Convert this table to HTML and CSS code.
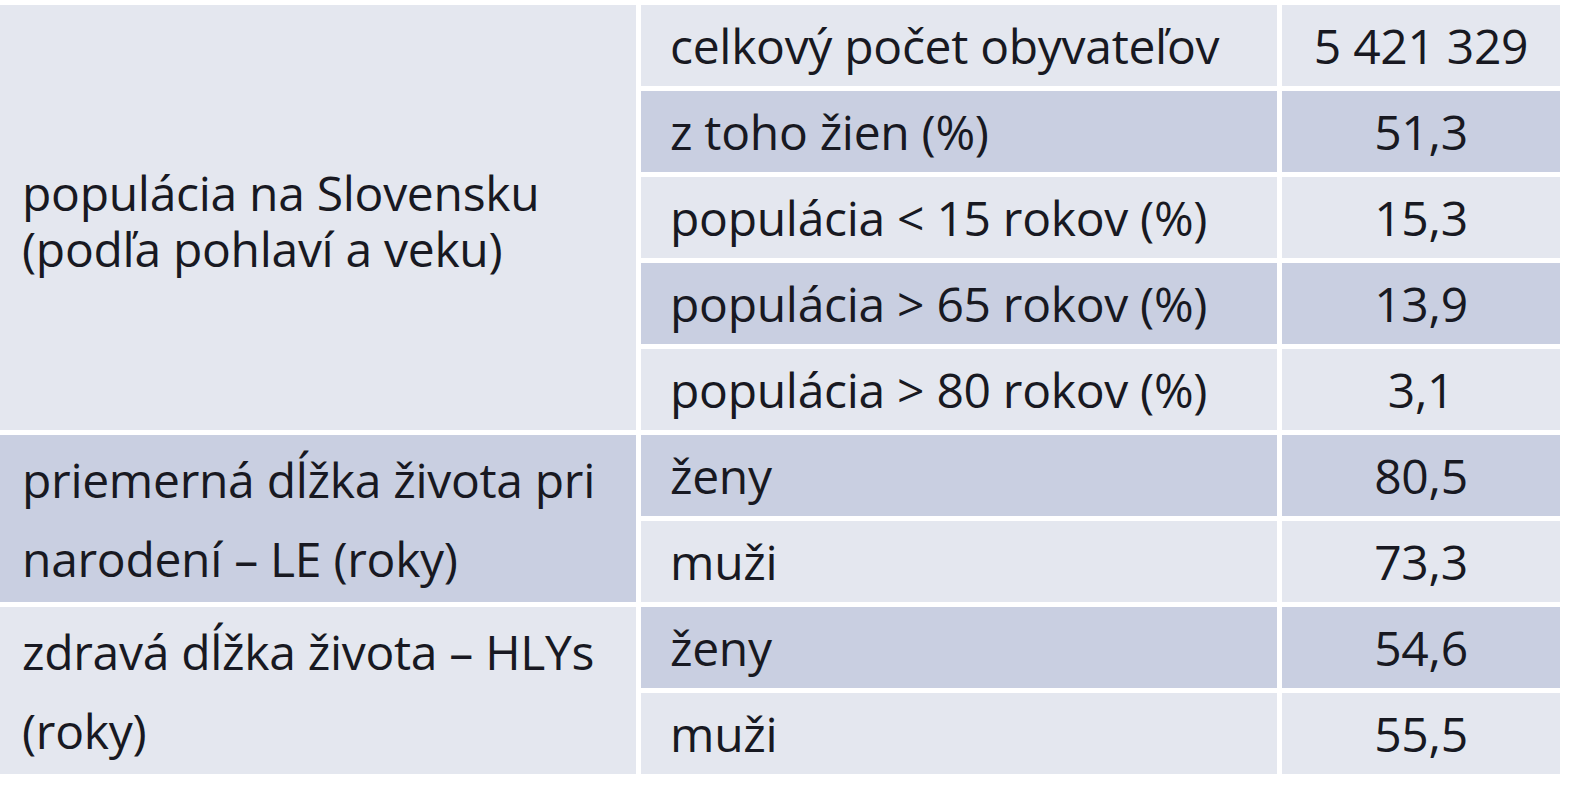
FILE: index.html
```html
<!DOCTYPE html>
<html lang="sk">
<head>
<meta charset="utf-8">
<title>Populácia na Slovensku</title>
<link rel="stylesheet" href="styles.css">
</head>
<body>
<div class="table">
  <div class="group light span5"><div class="glabel tight">populácia na Slovensku<br>(podľa pohlaví a veku)</div></div>
  <div class="cell label light">celkový počet obyvateľov</div>
  <div class="cell num light">5 421 329</div>
  <div class="cell label dark">z toho žien (%)</div>
  <div class="cell num dark">51,3</div>
  <div class="cell label light">populácia &lt; 15 rokov (%)</div>
  <div class="cell num light">15,3</div>
  <div class="cell label dark">populácia &gt; 65 rokov (%)</div>
  <div class="cell num dark">13,9</div>
  <div class="cell label light">populácia &gt; 80 rokov (%)</div>
  <div class="cell num light">3,1</div>

  <div class="group dark span2"><div class="glabel wide">priemerná dĺžka života pri<br>narodení – LE (roky)</div></div>
  <div class="cell label dark">ženy</div>
  <div class="cell num dark">80,5</div>
  <div class="cell label light">muži</div>
  <div class="cell num light">73,3</div>

  <div class="group light span2"><div class="glabel wide">zdravá dĺžka života – HLYs<br>(roky)</div></div>
  <div class="cell label dark">ženy</div>
  <div class="cell num dark">54,6</div>
  <div class="cell label light">muži</div>
  <div class="cell num light">55,5</div>
</div>
</body>
</html>
```

FILE: styles.css
```css
html, body {
  margin: 0;
  padding: 0;
  background: #ffffff;
}

body {
  padding-top: 5px;
  font-family: "Open Sans", "Noto Sans", sans-serif;
  color: #181922;
}

.table {
  display: grid;
  grid-template-columns: 636px 636px 278px;
  grid-auto-rows: 81px;
  column-gap: 5px;
  row-gap: 5px;
  width: 1560px;
}

.light { background: #e4e7ef; }
.dark { background: #c9cfe1; }

.group {
  grid-column: 1;
  display: flex;
  align-items: center;
  padding-left: 22px;
}

.span5 { grid-row: span 5; }
.span2 { grid-row: span 2; }

.glabel {
  font-size: 48px;
  letter-spacing: -0.3px;
}

.glabel.tight { line-height: 56px; padding-top: 6px; }
.glabel.wide { line-height: 79px; }

.cell {
  display: flex;
  align-items: center;
  font-size: 48px;
  letter-spacing: -0.3px;
  white-space: nowrap;
}

.label {
  padding-left: 29px;
}

.num {
  justify-content: center;
}
```
